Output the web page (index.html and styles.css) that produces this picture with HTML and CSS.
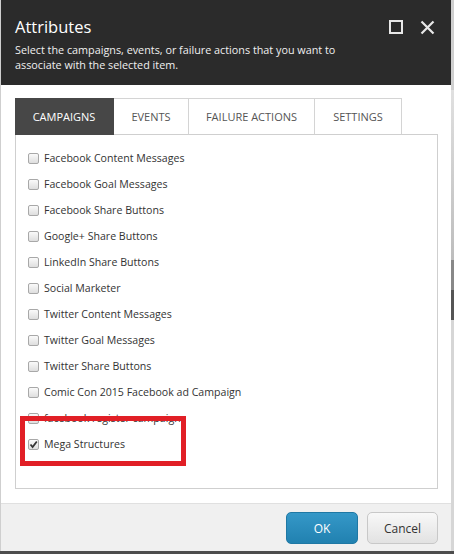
FILE: index.html
```html
<!DOCTYPE html>
<html>
<head>
<meta charset="utf-8">
<link rel="stylesheet" href="styles.css">
</head>
<body>
<div class="screen">
  <div class="row">
    <div class="dialog">
      <div class="header">
        <div class="titlebar">
          <div class="title">Attributes</div>
          <div class="controls">
            <svg class="ico" width="14" height="14" viewBox="0 0 14 14"><rect x="1" y="1" width="12" height="12" fill="none" stroke="#e8e8e8" stroke-width="2"/></svg>
            <svg class="ico" width="15" height="15" viewBox="0 0 15 15"><path d="M1.5 1.5 L13.5 13.5 M13.5 1.5 L1.5 13.5" stroke="#e8e8e8" stroke-width="2.2" fill="none"/></svg>
          </div>
        </div>
        <div class="subtitle">Select the campaigns, events, or failure actions that you want to associate with the selected item.</div>
      </div>
      <div class="body">
        <div class="tabs">
          <div class="tab active">CAMPAIGNS</div>
          <div class="tab">EVENTS</div>
          <div class="tab">FAILURE ACTIONS</div>
          <div class="tab">SETTINGS</div>
          <div class="tabfill"></div>
        </div>
        <div class="panel">
          <div class="item"><span class="cb"></span>Facebook Content Messages</div>
          <div class="item"><span class="cb"></span>Facebook Goal Messages</div>
          <div class="item"><span class="cb"></span>Facebook Share Buttons</div>
          <div class="item"><span class="cb"></span>Google+ Share Buttons</div>
          <div class="item"><span class="cb"></span>LinkedIn Share Buttons</div>
          <div class="item"><span class="cb"></span>Social Marketer</div>
          <div class="item"><span class="cb"></span>Twitter Content Messages</div>
          <div class="item"><span class="cb"></span>Twitter Goal Messages</div>
          <div class="item"><span class="cb"></span>Twitter Share Buttons</div>
          <div class="item"><span class="cb"></span>Comic Con 2015 Facebook ad Campaign</div>
          <div class="item"><span class="cb"></span>facebook register campaign</div>
          <div class="item"><span class="cb checked"><svg width="9" height="9" viewBox="0 0 9 9"><path d="M1.5 4.5 L3.6 7 L7.8 1.5" stroke="#333" stroke-width="1.8" fill="none"/></svg></span>Mega Structures</div>
          <div class="redbox"></div>
        </div>
      </div>
      <div class="footer">
        <button class="btn ok">OK</button>
        <button class="btn cancel">Cancel</button>
      </div>
    </div>
    <div class="edge"></div>
  </div>
  <div class="under"></div>
</div>
</body>
</html>
```
FILE: styles.css
```css
html, body {
  margin: 0;
  padding: 0;
  background: #555;
}
body {
  font-family: "Open Sans", "DejaVu Sans", sans-serif;
  width: 454px;
  height: 554px;
  overflow: hidden;
}
.screen {
  display: flex;
  flex-direction: column;
  width: 454px;
  height: 554px;
}
.row {
  display: flex;
  height: 551px;
}
.dialog {
  width: 451px;
  height: 551px;
  display: flex;
  flex-direction: column;
  background: #fff;
  border-left: 1px solid #cfcfcf;
  box-sizing: border-box;
}
.edge {
  width: 3px;
  background: linear-gradient(#cfcfcf 0, #cfcfcf 90px, #e0e0e0 90px, #bdbdbd 260px, #888 260px, #888 290px, #555 290px, #555 320px, #d6d6d6 320px, #d6d6d6 100%);
}
.under {
  flex: 1;
  background: #4d4d4d;
}
.header {
  background: #2b2b2b;
  height: 85px;
  box-sizing: border-box;
  padding: 14px 0 0 14px;
  color: #fff;
}
.titlebar {
  display: flex;
  align-items: center;
  justify-content: space-between;
  height: 26px;
}
.title {
  font-size: 16.5px;
  line-height: 26px;
  color: #fff;
}
.controls {
  display: flex;
  align-items: center;
  gap: 17px;
  padding-right: 16px;
  padding-top: 0;
}
.ico {
  display: block;
}
.subtitle {
  font-size: 10.8px;
  line-height: 15px;
  color: #f0f0f0;
  width: 330px;
  margin-top: 2px;
}
.body {
  flex: 1;
  padding: 13px 13px 14px 14px;
  display: flex;
  flex-direction: column;
}
.tabs {
  display: flex;
  height: 37px;
}
.tab {
  box-sizing: border-box;
  height: 37px;
  display: flex;
  align-items: center;
  justify-content: center;
  font-size: 11px;
  color: #555;
  border-top: 1px solid #d4d4d4;
  border-right: 1px solid #d4d4d4;
  border-bottom: 1px solid #cfcfcf;
}
.tab:nth-child(1) { width: 99px; }
.tab:nth-child(2) { width: 75px; }
.tab:nth-child(3) { width: 126px; }
.tab:nth-child(4) { width: 87px; }
.tab.active {
  background: #474747;
  color: #fff;
  border-color: #474747;
}
.tabfill {
  flex: 1;
  border-bottom: 1px solid #cfcfcf;
}
.panel {
  position: relative;
  flex: 1;
  border: 1px solid #cfcfcf;
  border-top: none;
  padding: 10px 0 0 12px;
}
.item {
  display: flex;
  align-items: center;
  height: 26px;
  font-size: 10.6px;
  color: #333;
}
.cb {
  width: 9px;
  height: 9px;
  border: 1px solid #a8a8a8;
  border-radius: 2px;
  background: linear-gradient(#fafafa, #dedede);
  margin-right: 5px;
  display: flex;
  align-items: center;
  justify-content: center;
}
.cb svg { display: block; }
.redbox {
  position: absolute;
  left: 4px;
  top: 281px;
  width: 156px;
  height: 40px;
  border: 5px solid #e11f26;
}
.footer {
  height: 48px;
  background: #f0f0f0;
  border-top: 1px solid #e0e0e0;
  display: flex;
  justify-content: flex-end;
  align-items: flex-start;
  gap: 9px;
  padding: 8px 13px 0 0;
  box-sizing: border-box;
}
.btn {
  font-family: "Open Sans", "DejaVu Sans", sans-serif;
  font-size: 12px;
  height: 32px;
  border-radius: 5px;
  box-sizing: border-box;
  padding: 0;
}
.ok {
  width: 72px;
  background: linear-gradient(#3598c8, #2181b0);
  border: 1px solid #1f78a4;
  color: #fff;
}
.cancel {
  width: 71px;
  background: linear-gradient(#f8f8f8, #e2e2e2);
  border: 1px solid #c8c8c8;
  color: #333;
}
```
